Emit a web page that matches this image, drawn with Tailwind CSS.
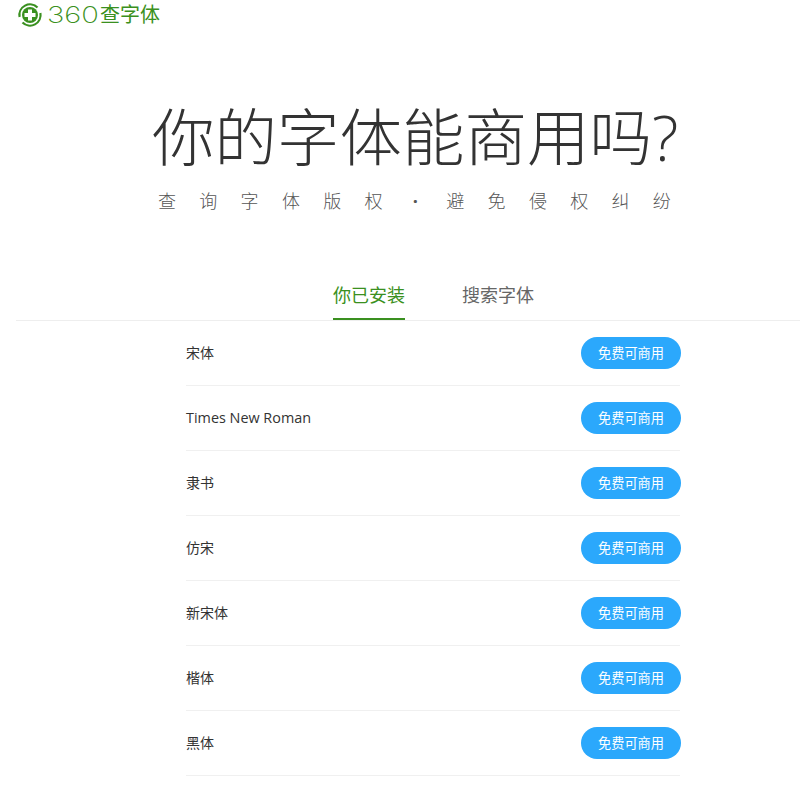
<!DOCTYPE html>
<html lang="zh">
<head>
<meta charset="utf-8">
<title>360查字体</title>
<script src="https://cdn.jsdelivr.net/npm/@tailwindcss/browser@4"></script>
</head>
<body class="bg-white h-[787px] overflow-hidden font-['Open_Sans','Noto_Sans_CJK_SC',sans-serif] text-[#333]">
  <!-- Logo -->
  <div class="flex items-center h-[30px] pl-[17px] text-[#3a9020]">
    <svg class="w-[26px] h-[26px]" viewBox="0 0 26 26" fill="none">
      <path d="M2.6 15A10.6 10.6 0 0 1 20.5 5.5" stroke="#3a9020" stroke-width="2.2" />
      <path d="M23.4 11A10.6 10.6 0 0 1 5.5 20.5" stroke="#3a9020" stroke-width="2.2" />
      <circle cx="13" cy="13" r="8" fill="#3a9020" />
      <path d="M11 7.5h4v3.5h3.5v4H15v3.5h-4V15H7.5v-4H11z" fill="#fff" />
    </svg>
    <span class="ml-[4px] w-[53px] inline-block origin-left scale-x-[1.27] font-['Inter'] text-[23px] leading-[30px] font-extralight whitespace-nowrap">360</span>
    <span class="text-[20px] leading-[30px] whitespace-nowrap">查字体</span>
  </div>

  <!-- Hero -->
  <h1 class="mt-[67px] pl-[152px] text-[62.5px] leading-[80px] font-light whitespace-nowrap text-[#333]">你的字体能商用吗?</h1>
  <p class="mt-[9px] pl-[158px] flex text-[18px] leading-[30px] font-light tracking-[23.3px] whitespace-nowrap text-[#555]">查询字体版权<span class="w-[40.5px] pl-[7px] font-bold">·</span>避免侵权纠纷</p>

  <!-- Tabs -->
  <div class="mt-[59px] ml-[16px] flex h-[46px] border-b border-[#eee] text-[18px]">
    <div class="ml-[317px] h-[45px] w-[72px] border-b-2 border-[#3a9020] text-[#3a9020] leading-[40px] whitespace-nowrap">你已安装</div>
    <div class="ml-[57px] leading-[40px] text-[#666] whitespace-nowrap">搜索字体</div>
  </div>

  <!-- Font list -->
  <ul class="ml-[186px] w-[494px] text-sm">
    <li class="flex items-center justify-between h-[65px] border-b border-[#f0f0f0]"><span>宋体</span><span class="w-[100px] h-[32px] -mr-px rounded-full bg-[#2ba8fc] text-white text-[13.2px] leading-[32px] text-center">免费可商用</span></li>
    <li class="flex items-center justify-between h-[65px] border-b border-[#f0f0f0]"><span class="text-[14.4px]">Times New Roman</span><span class="w-[100px] h-[32px] -mr-px rounded-full bg-[#2ba8fc] text-white text-[13.2px] leading-[32px] text-center">免费可商用</span></li>
    <li class="flex items-center justify-between h-[65px] border-b border-[#f0f0f0]"><span>隶书</span><span class="w-[100px] h-[32px] -mr-px rounded-full bg-[#2ba8fc] text-white text-[13.2px] leading-[32px] text-center">免费可商用</span></li>
    <li class="flex items-center justify-between h-[65px] border-b border-[#f0f0f0]"><span>仿宋</span><span class="w-[100px] h-[32px] -mr-px rounded-full bg-[#2ba8fc] text-white text-[13.2px] leading-[32px] text-center">免费可商用</span></li>
    <li class="flex items-center justify-between h-[65px] border-b border-[#f0f0f0]"><span>新宋体</span><span class="w-[100px] h-[32px] -mr-px rounded-full bg-[#2ba8fc] text-white text-[13.2px] leading-[32px] text-center">免费可商用</span></li>
    <li class="flex items-center justify-between h-[65px] border-b border-[#f0f0f0]"><span>楷体</span><span class="w-[100px] h-[32px] -mr-px rounded-full bg-[#2ba8fc] text-white text-[13.2px] leading-[32px] text-center">免费可商用</span></li>
    <li class="flex items-center justify-between h-[65px] border-b border-[#f0f0f0]"><span>黑体</span><span class="w-[100px] h-[32px] -mr-px rounded-full bg-[#2ba8fc] text-white text-[13.2px] leading-[32px] text-center">免费可商用</span></li>
  </ul>
</body>
</html>
